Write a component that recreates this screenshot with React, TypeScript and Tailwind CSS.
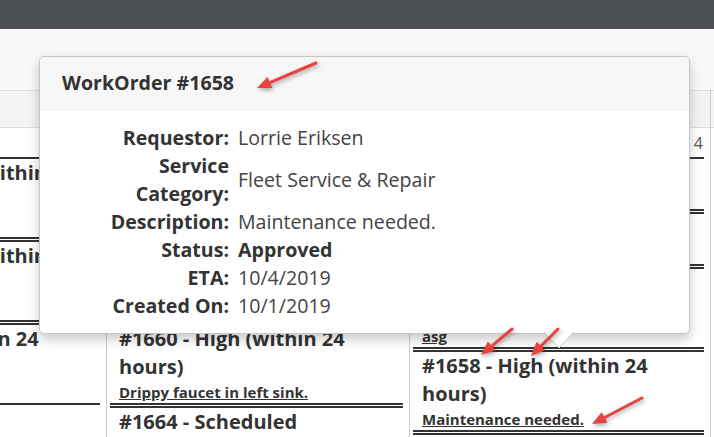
import React from "react";

type Card = { title: string; desc: string };
type Col = { width: string; head: string; count: number; cards: Card[] };

const COLS: Col[] = [
  {
    width: "w-[306px] -ml-[199px]",
    head: "Submitted",
    count: 3,
    cards: [
      { title: "#1662 - Medium (within next week)", desc: "Replace ceiling tile." },
      { title: "#1659 - Medium (within next week)", desc: "Light out in hall." },
      { title: "#1657 - High (within 24 hours)", desc: "Door sticks." },
    ],
  },
  {
    width: "w-[303px]",
    head: "Pending",
    count: 4,
    cards: [
      { title: "#1661 - Medium (within next week)", desc: "Squeaky door hinge." },
      { title: "#1663 - Medium (within next week)", desc: "Window won't latch." },
      { title: "#1660 - High (within 24 hours)", desc: "Drippy faucet in left sink." },
      { title: "#1664 - Scheduled", desc: "Annual inspection." },
    ],
  },
  {
    width: "w-[301px]",
    head: "Approved",
    count: 4,
    cards: [
      { title: "#1665 - Scheduled", desc: "Replace filter." },
      { title: "#1667 - Scheduled", desc: "Paint wall." },
      { title: "#1654 - Medium (within next week)", desc: "asg" },
      { title: "#1658 - High (within 24 hours)", desc: "Maintenance needed." },
      { title: "#1666 - Low (within 30 days)", desc: "Touch up trim." },
    ],
  },
];

const DETAILS: { label: string; value: string; strong?: boolean }[] = [
  { label: "Requestor:", value: "Lorrie Eriksen" },
  { label: "Service Category:", value: "Fleet Service & Repair" },
  { label: "Description:", value: "Maintenance needed." },
  { label: "Status:", value: "Approved", strong: true },
  { label: "ETA:", value: "10/4/2019" },
  { label: "Created On:", value: "10/1/2019" },
];

// annotation arrows drawn over the screenshot
const ARROWS = [
  [316, 63, 257, 88],
  [512, 329, 481, 355],
  [558, 329, 531, 356],
  [642, 398, 592, 424],
];

function Arrow({ x1, y1, x2, y2 }: { x1: number; y1: number; x2: number; y2: number }) {
  const len = Math.hypot(x2 - x1, y2 - y1);
  const ux = (x2 - x1) / len;
  const uy = (y2 - y1) / len;
  const bx = x2 - ux * 14;
  const by = y2 - uy * 14;
  const pts = `${x2},${y2} ${bx - uy * 6},${by + ux * 6} ${bx + uy * 6},${by - ux * 6}`;
  return (
    <g>
      <line x1={x1} y1={y1} x2={bx + ux * 2} y2={by + uy * 2} stroke="#e8423f" strokeWidth={3} strokeLinecap="round" />
      <polygon points={pts} fill="#e8423f" />
    </g>
  );
}

function WorkCard({ card }: { card: Card }) {
  return (
    <div className="mb-[1px] border-y-2 border-[#333] pl-[9px]">
      <div className="text-[20px] font-bold leading-[28px] text-[#333]">{card.title}</div>
      <a className="block text-[15px] font-bold leading-[22px] text-[#333] underline">{card.desc}</a>
    </div>
  );
}

function Column({ col }: { col: Col }) {
  return (
    <div className={`${col.width} shrink-0 border-r border-[#ccc]`}>
      <div className="flex h-[38px] items-center border-y border-[#ddd] bg-[#f4f4f4] px-2 text-[16px] font-bold text-[#333]">
        {col.head}
      </div>
      <div className="pl-[3px] pr-[6px]">
        <div className="flex h-[29px] items-center justify-end pr-[1px] text-[16px] text-[#555]">{col.count}</div>
        {col.cards.map((c) => (
          <WorkCard key={c.title} card={c} />
        ))}
      </div>
    </div>
  );
}

export default function App() {
  return (
    <div className="relative h-screen overflow-hidden bg-white font-['Open_Sans',sans-serif]">
      <div className="h-[29px] bg-[#4b4e53]" />
      <div className="h-[61px] bg-[#f9f9f9]" />

      <div className="flex">
        {COLS.map((c) => (
          <Column key={c.head} col={c} />
        ))}
        <div className="flex-1">
          <div className="h-[38px] border-y border-[#ddd] bg-[#f4f4f4]" />
        </div>
      </div>

      {/* popover */}
      <div className="absolute left-[39px] top-[56px] w-[651px] rounded-[5px] border border-[#c6c6c6] bg-white shadow-[0_5px_12px_rgba(0,0,0,0.22)]">
        <div className="flex h-[53px] items-center rounded-t-[5px] border-b border-[#ebebeb] bg-[#f7f7f7] px-[22px]">
          <h3 className="text-[19.6px] font-bold text-[#333]">WorkOrder #1658</h3>
        </div>
        <div className="grid grid-cols-[126px_1fr] items-center gap-x-[9px] pb-[13px] pl-[63px] pt-[14px] text-[19.6px] leading-[28px]">
          {DETAILS.map((d) => (
            <React.Fragment key={d.label}>
              <div className="text-right font-bold text-[#333]">{d.label}</div>
              <div className={d.strong ? "font-bold text-[#333]" : "text-[#444]"}>{d.value}</div>
            </React.Fragment>
          ))}
        </div>
        <svg className="absolute left-[503px] top-full -mt-[1px]" width="32" height="17" viewBox="0 0 32 17">
          <polygon points="1,0 16,16 31,0" fill="#fff" />
          <polyline points="1,0 16,16 31,0" fill="none" stroke="#c6c6c6" strokeWidth="1" />
        </svg>
      </div>

      <svg className="pointer-events-none absolute inset-0 h-full w-full drop-shadow-[1px_2px_2px_rgba(0,0,0,0.35)]">
        {ARROWS.map(([x1, y1, x2, y2], i) => (
          <Arrow key={i} x1={x1} y1={y1} x2={x2} y2={y2} />
        ))}
      </svg>
    </div>
  );
}
